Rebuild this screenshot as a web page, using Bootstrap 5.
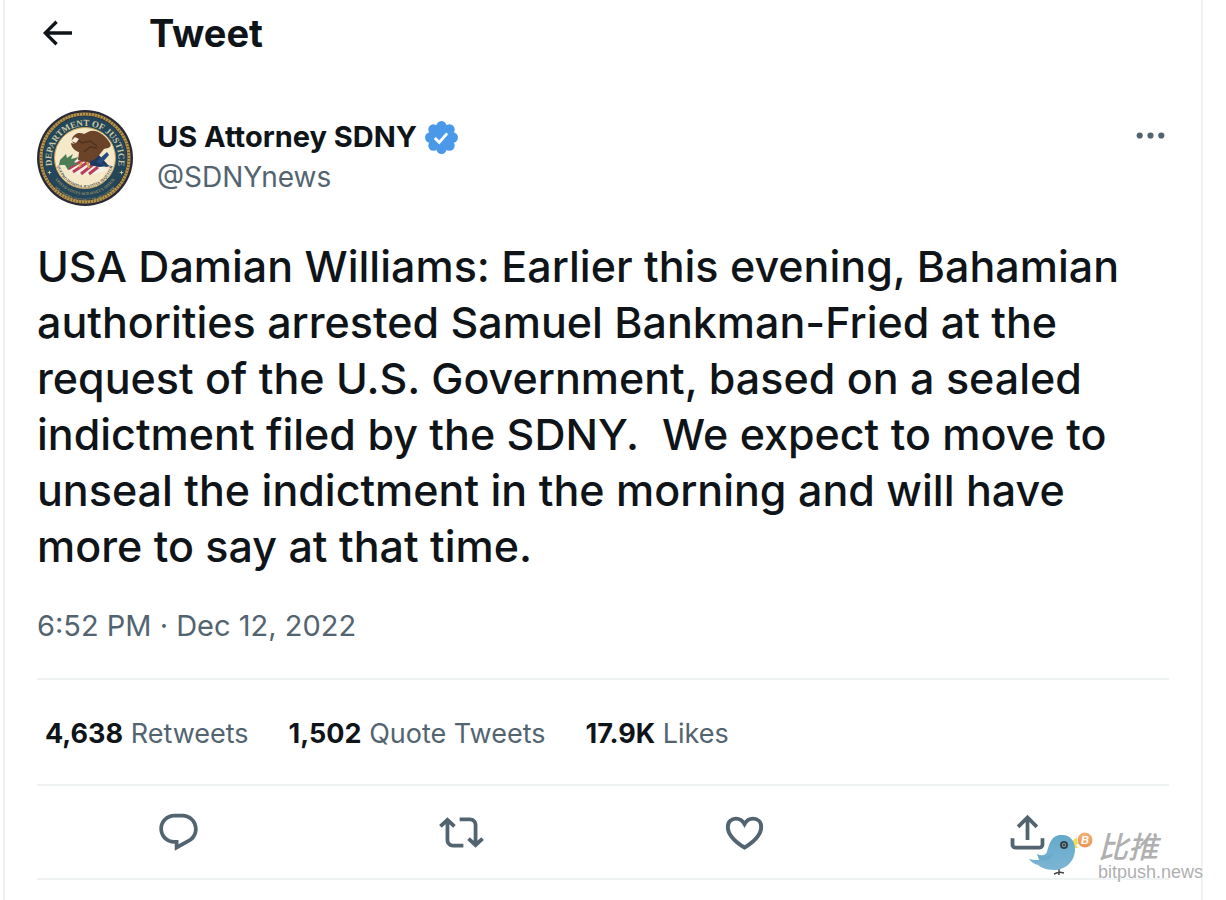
<!DOCTYPE html>
<html lang="en">
<head>
<meta charset="utf-8">
<meta name="viewport" content="width=device-width, initial-scale=1">
<title>US Attorney SDNY: Tweet</title>
<link href="https://cdn.jsdelivr.net/npm/bootstrap@5.3.0/dist/css/bootstrap.min.css" rel="stylesheet">
<style>
  :root { --ink: #0f1419; --muted-ink: #536471; --line: #eff3f4; }
  body { font-family: Inter, "Liberation Sans", sans-serif; color: var(--ink); background: #fff; font-size: 27px; line-height: 40px; }
  a { color: inherit; text-decoration: none; }
  a:hover { text-decoration: underline; }
  svg { display: block; }
  .tweet-column { margin: 0 23px 0 3px; padding: 0 32px; border: solid var(--line); border-width: 0 2px; }
  .topbar { height: 66px; gap: 72px; }
  .topbar h1 { font-size: 38px; line-height: 48px; font-weight: 700; }
  .plain-btn { background: none; border: 0; padding: 0; color: inherit; }
  .muted-ink { color: var(--muted-ink); }
  .author { margin-top: 44px; gap: 24px; }
  .author-names { padding-top: 7px; }
  .author-name { font-size: 29px; font-weight: 700; gap: 8px; }
  .author-handle { font-size: 28px; }
  .author-menu { padding-top: 7px; }
  .tweet-text { margin: 32px 0 0; font-size: 43px; font-weight: 500; line-height: 56px; }
  .tweet-date { margin-top: 32px; padding-bottom: 32px; font-size: 29px; }
  .ruled { border-bottom: 2px solid var(--line); }
  .stats { padding: 34px 8px 30px; gap: 40px; }
  .stats strong { font-weight: 700; color: var(--ink); }
  .actions { height: 94px; }
  .watermark { right: -38px; bottom: -7px; width: 180px; height: 56px; pointer-events: none; color: #b0b0b0; }
  .watermark-words { width: 109px; }
  .watermark-cn { font: italic 500 30px/32px "Noto Sans CJK SC", sans-serif; }
  .watermark-url { font: 18px/22px "Liberation Sans", sans-serif; }
</style>
</head>
<body>
<main class="tweet-column min-vh-100">
  <header class="topbar d-flex align-items-center">
    <button class="plain-btn" type="button" aria-label="Back">
      <svg width="40" height="40" viewBox="0 0 24 24" fill="currentColor"><path d="M7.414 13l5.043 5.04-1.414 1.42L3.586 12l7.457-7.46 1.414 1.42L7.414 11H21v2H7.414z"/></svg>
    </button>
    <h1 class="m-0">Tweet</h1>
  </header>

  <article>
    <div class="author d-flex align-items-start">
      <a href="#" aria-label="US Attorney SDNY profile">
        <svg width="96" height="96" viewBox="0 0 96 96">
          <defs>
            <path id="ringTop" d="M17 62A33.500 33.500 0 1 1 79 62"/>
            <path id="ringLow" d="M8 61A41.500 41.500 0 0 0 88 61"/>
            <path id="ringLower" d="M15 64A36.500 36.500 0 0 0 81 64"/>
            <path id="motto" d="M20 44A28.500 28.500 0 1 0 76 44"/>
            <clipPath id="disc"><circle cx="48" cy="48" r="30"/></clipPath>
          </defs>
          <circle cx="48" cy="48" r="48" fill="#2a2a36"/>
          <circle cx="48" cy="48" r="44" fill="none" stroke="#b8964b" stroke-width="3"/>
          <circle cx="48" cy="48" r="44" fill="none" stroke="#6b5936" stroke-width="3" stroke-dasharray="1 2"/>
          <circle cx="48" cy="48" r="42" fill="#24465a"/>
          <circle cx="48" cy="48" r="30.500" fill="#f5e9c9" stroke="#c9a556" stroke-width="1"/>
          <g font-family="Liberation Serif, serif" fill="#cfc9a2">
            <text font-size="9" font-weight="700"><textPath href="#ringTop" startOffset="50%" text-anchor="middle">DEPARTMENT OF JUSTICE</textPath></text>
            <text font-size="4" fill="#c4ad68"><textPath href="#ringLow" startOffset="50%" text-anchor="middle">SOUTHERN DISTRICT OF NEW YORK</textPath></text>
            <text font-size="4" fill="#c4ad68"><textPath href="#ringLower" startOffset="50%" text-anchor="middle">UNITED STATES ATTORNEY'S OFFICE</textPath></text>
            <text font-size="4" font-weight="700" fill="#4b473c"><textPath href="#motto" startOffset="50%" text-anchor="middle">QUI PRO DOMINA JUSTITIA SEQUITUR</textPath></text>
          </g>
          <g clip-path="url(#disc)">
            <path d="M30 54L44 47 61 49 70 60 58 64 43 65 32 61Z" fill="#f6f0e7"/>
            <path d="M31 59L48 49M36 62L54 50M44 64L58 53M52 64L61 57" stroke="#b8405a" stroke-width="3"/>
            <path d="M52 49L61 44 72 56 62 57 53 55Z" fill="#20395f"/>
            <path d="M59 52L70 42 72 45 64 54 74 56 69 57Z" fill="#284a80"/>
            <path d="M23 50l6-6 1 4 6-4-2 5 8-2-5 5 5 2-8 2-3 4-3-5-6 0z" fill="#4c7d57"/>
            <path d="M35 29C37 23 43 22 47 24L51 22C59 18 68 25 73 33C75 37 72 38 67 39L63 44C60 48 55 52 49 52L41 50 42 42C37 41 34 36 34 33L38 34C36 33 34 31 35 29Z" fill="#6a4328"/>
            <path d="M38 28l7 5 8-2 7 5M47 42l6-5 7 1" fill="none" stroke="#4d321f" stroke-width="1.500"/>
            <path d="M45 52l-3 5m8-5l2 6" stroke="#d6a543" stroke-width="2"/>
            <path d="M34 31l4-4 4 2-3 4z" fill="#f3ead9"/>
          </g>
          <path d="M12 60l1 2 2 0-2 1 0 2-1-2-2 0 2-1zM84 60l1 2 2 0-2 1 0 2-1-2-2 0 2-1z" fill="#e6d9a0"/>
        </svg>
      </a>
      <div class="author-names flex-grow-1">
        <a class="author-name d-flex align-items-center" href="#">
          <span>US Attorney SDNY</span>
          <svg width="33" height="33" viewBox="0 0 32 32" role="img" aria-label="Verified account">
            <g fill="#4a99e9"><circle cx="16" cy="16" r="13"/><circle cx="16" cy="5" r="5"/><circle cx="23.800" cy="8.200" r="5"/><circle cx="27" cy="16" r="5"/><circle cx="23.800" cy="23.800" r="5"/><circle cx="16" cy="27" r="5"/><circle cx="8.200" cy="23.800" r="5"/><circle cx="5" cy="16" r="5"/><circle cx="8.200" cy="8.200" r="5"/></g>
            <path d="M9.500 16.500l4.300 4.200 7.700-8.700" fill="none" stroke="#fff" stroke-width="2.800"/>
          </svg>
        </a>
        <a class="author-handle muted-ink" href="#">@SDNYnews</a>
      </div>
      <div class="author-menu">
        <button class="plain-btn muted-ink" type="button" aria-label="More">
          <svg width="37" height="37" viewBox="0 0 24 24" fill="currentColor"><circle cx="5" cy="12" r="2"/><circle cx="12" cy="12" r="2"/><circle cx="19" cy="12" r="2"/></svg>
        </button>
      </div>
    </div>

    <p class="tweet-text">USA Damian Williams: Earlier this evening, Bahamian<br>authorities arrested Samuel Bankman-Fried at the<br>request of the U.S. Government, based on a sealed<br>indictment filed by the SDNY.&nbsp; We expect to move to<br>unseal the indictment in the morning and will have<br>more to say at that time.</p>

    <div class="tweet-date ruled muted-ink"><a href="#">6:52 PM · Dec 12, 2022</a></div>

    <div class="stats ruled d-flex muted-ink">
      <a href="#"><strong>4,638</strong> Retweets</a>
      <a href="#"><strong>1,502</strong> Quote Tweets</a>
      <a href="#"><strong>17.9K</strong> Likes</a>
    </div>

    <div class="actions ruled row g-0 align-items-center position-relative muted-ink">
      <div class="col d-flex justify-content-center">
        <button class="plain-btn" type="button" aria-label="Reply"><svg width="45" height="45" viewBox="0 0 24 24" fill="currentColor"><path d="M1.751 10c0-4.420 3.584-8 8.005-8h4.366c4.490 0 8.129 3.640 8.129 8.130 0 2.960-1.607 5.680-4.196 7.110l-8.054 4.460v-3.690h-.067c-4.490.1-8.183-3.510-8.183-8.010zm8.005-6c-3.317 0-6.005 2.690-6.005 6 0 3.370 2.770 6.080 6.138 6.010l.351-.01h1.761v2.300l5.087-2.810c1.951-1.080 3.163-3.130 3.163-5.360 0-3.390-2.744-6.130-6.129-6.130H9.756z"/></svg></button>
      </div>
      <div class="col d-flex justify-content-center">
        <button class="plain-btn" type="button" aria-label="Retweet"><svg width="45" height="45" viewBox="0 0 24 24" fill="currentColor"><path d="M4.500 3.880l4.432 4.140-1.364 1.460L5.500 7.550V16c0 1.100.896 2 2 2H13v2H7.500c-2.209 0-4-1.790-4-4V7.550L1.432 9.480.068 8.020 4.500 3.880zM16.500 6H11V4h5.500c2.209 0 4 1.790 4 4v8.450l2.068-1.930 1.364 1.460-4.432 4.140-4.432-4.140 1.364-1.460 2.068 1.930V8c0-1.100-.896-2-2-2z"/></svg></button>
      </div>
      <div class="col d-flex justify-content-center">
        <button class="plain-btn" type="button" aria-label="Like"><svg width="45" height="45" viewBox="0 0 24 24" fill="none" stroke="currentColor" stroke-width="2.100"><path d="M12 20C7 16.900 3.100 12.900 3.100 9C3.100 6.300 5 4.600 7.400 4.600C9.400 4.600 11 5.700 12 7.500C13 5.700 14.600 4.600 16.600 4.600C19 4.600 20.900 6.300 20.900 9C20.900 12.900 17 16.900 12 20Z"/></svg></button>
      </div>
      <div class="col d-flex justify-content-center">
        <button class="plain-btn" type="button" aria-label="Share"><svg width="45" height="45" viewBox="0 0 24 24" fill="currentColor"><path d="M12 2.590l5.700 5.700-1.410 1.420L13 6.410V16h-2V6.410l-3.300 3.300-1.410-1.420L12 2.590zM21 15l-.02 3.510c0 1.380-1.120 2.490-2.500 2.490H5.500C4.110 21 3 19.880 3 18.500V15h2v3.500c0 .280.220.5.5.5h12.980c.280 0 .5-.220.5-.5L19 15h2z"/></svg></button>
      </div>

      <div class="watermark position-absolute d-flex justify-content-between">
        <svg width="66" height="50" viewBox="0 0 66 50">
          <defs>
            <linearGradient id="plumage" x1="0" y1="0" x2="0" y2="1"><stop offset="0" stop-color="#65a9cb"/><stop offset="1" stop-color="#7cb5d3"/></linearGradient>
            <linearGradient id="coin" x1="0" y1="0" x2="0" y2="1"><stop offset="0" stop-color="#f0b27a"/><stop offset="1" stop-color="#e99550"/></linearGradient>
          </defs>
          <path d="M46 11l4-3 0 5 2 1-3 2 2 3-5 0z" fill="#f2df58"/>
          <path d="M32 37v7m-5 1l5-2 5 1m-5-1v3" fill="none" stroke="#444" stroke-width="1.500"/>
          <path d="M2 30C6 31 9 31 12 31L10 25C14 27 18 27 20 23C22 16 24 6 34 6C42 5 48 11 48 20C48 33 38 41 27 41C18 41 14 38 11 36C7 35 4 33 2 30Z" fill="url(#plumage)"/>
          <path d="M10 25c5 4 12 3 16-2-2 8-8 10-13 8z" fill="#5d9fc2" opacity=".4"/>
          <circle cx="37" cy="16" r="4" fill="#344047"/><circle cx="37" cy="16" r="2" fill="#8fa8b3"/><circle cx="37" cy="16" r="1" fill="#222"/>
          <circle cx="58" cy="11" r="7.500" fill="url(#coin)"/>
          <text x="58" y="15" text-anchor="middle" font-family="Liberation Sans, sans-serif" font-size="11" font-weight="700" font-style="italic" fill="#fff">B</text>
        </svg>
        <div class="watermark-words">
          <div class="watermark-cn" lang="zh">比推</div>
          <div class="watermark-url">bitpush.news</div>
        </div>
      </div>
    </div>
  </article>
</main>
<script src="https://cdn.jsdelivr.net/npm/bootstrap@5.3.0/dist/js/bootstrap.bundle.min.js"></script>
</body>
</html>
